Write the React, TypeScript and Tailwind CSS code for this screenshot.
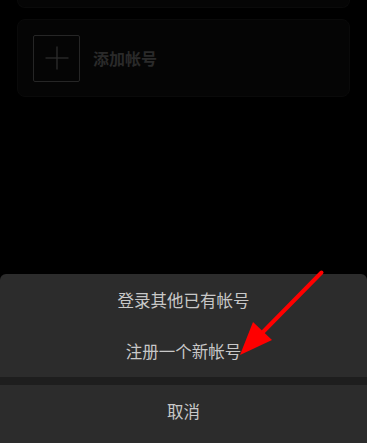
import React from "react";

export default function App() {
  const font = { fontFamily: '"Noto Sans CJK SC", "Noto Sans", sans-serif' };
  return (
    <div className="relative w-[367px] h-[443px] bg-black flex flex-col overflow-hidden" style={font}>
      <div className="mx-[17px] h-[8px] rounded-b-[8px] bg-[#050505] border border-t-0 border-[#0a0a0a]" />
      <div className="mx-[17px] mt-[11px] h-[78px] rounded-[8px] bg-[#050505] border border-[#0a0a0a] flex items-center pl-[15px]">
        <div className="w-[47px] h-[47px] rounded-[2px] border border-[#262626] flex items-center justify-center">
          <svg width="24" height="24" viewBox="0 0 24 24">
            <line x1="12" y1="0.5" x2="12" y2="23.5" stroke="#2e2e2e" strokeWidth="1.3" />
            <line x1="0.5" y1="12" x2="23.5" y2="12" stroke="#2e2e2e" strokeWidth="1.3" />
          </svg>
        </div>
        <span className="ml-[13px] text-[16px] font-bold text-[#2a2a2a] leading-none">添加帐号</span>
      </div>

      <div className="mt-auto bg-[#2c2c2c] rounded-t-[6px] flex flex-col">
        <div className="h-[51.5px] flex items-center justify-center text-[16.5px] text-[#c8c8c8] leading-none">登录其他已有帐号</div>
        <div className="h-[51.5px] flex items-center justify-center text-[16.5px] text-[#c8c8c8] leading-none">注册一个新帐号</div>
        <div className="h-[8px] bg-[#1e1e1e]" />
        <div className="h-[53px] flex items-center justify-center text-[16.5px] text-[#c8c8c8] leading-none">取消</div>
        <div className="h-[5px]" />
      </div>

      <svg className="absolute left-0 top-0 pointer-events-none" width="367" height="443" viewBox="0 0 367 443">
        <line x1="321.5" y1="272.5" x2="261" y2="334" stroke="#ff0000" strokeWidth="4" strokeLinecap="round" />
        <polygon points="240,355 253,322 272,340" fill="#ff0000" />
      </svg>
    </div>
  );
}
